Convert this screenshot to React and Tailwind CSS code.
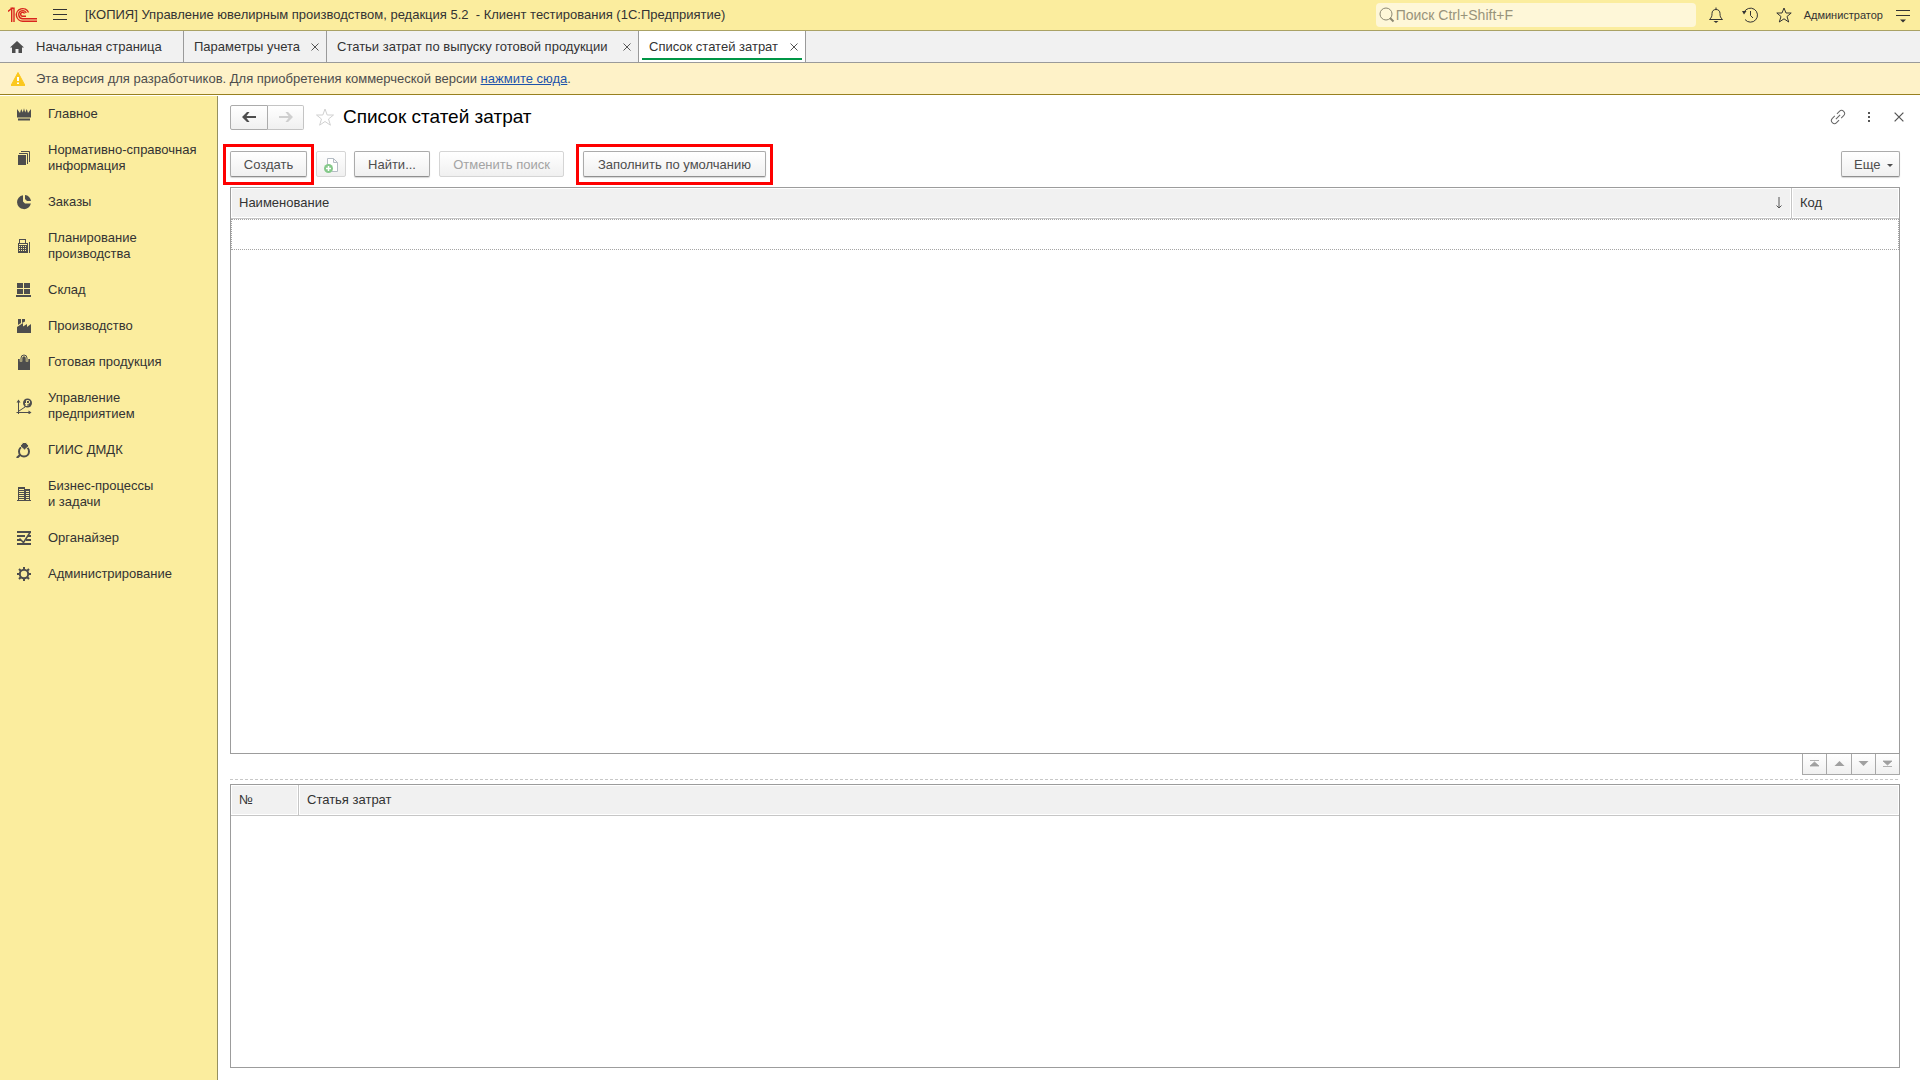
import React from 'react';

const Svg = ({ size = 'size-4', box = 16, children, ...rest }) => (
  <svg viewBox={`0 0 ${box} ${box}`} className={`${size} shrink-0`} fill="none" aria-hidden="true" {...rest}>
    {children}
  </svg>
);

const ink = '#4d4d4d';

const icons = {
  crown: (
    <Svg fill={ink}>
      <path d="M1 3l3 4 1.200-4L6.800 6.500 8 2.300 9.200 6.500 10.800 3 12 7l3-4v8.500H1z" />
      <path d="M2 12.500h12v2H2z" />
    </Svg>
  ),
  docs: (
    <Svg fill={ink}>
      <path d="M2 5h8v10H2z" />
      <path d="M3 3.500h8.500V14M5 1.500h8.500V12" stroke={ink} fill="none" />
    </Svg>
  ),
  pie: (
    <Svg fill={ink}>
      <path d="M7 1.200A7 7 0 1 0 14.900 9.500H9L7 7.500z" />
      <path d="M9 1a6.500 6.500 0 0 1 6 6H11L9 5z" />
    </Svg>
  ),
  calculator: (
    <Svg fill={ink} shapeRendering="crispEdges">
      <path fillRule="evenodd" d="M3 1h7v4h2v10H2V5h1zM4 2v3h5V2zM3 6v1h8V6zM3 8v1h1V8zm2 0v1h1V8zm2 0v1h1V8zm2 0v1h1V8zM3 10v1h1v-1zm2 0v1h1v-1zm2 0v1h1v-1zm2 0v1h1v-1zM3 12v1h1v-1zm2 0v1h1v-1zm2 0v1h1v-1zm2 0v1h1v-1z" />
      <path d="M13 4h1v11h-1z" />
    </Svg>
  ),
  store: (
    <Svg fill={ink} shapeRendering="crispEdges">
      <path d="M1 1h6v5H1zM8 1h6v5H8zM1 7h6v5H1zM8 7h6v5H8zM0 13h15v2H0z" />
    </Svg>
  ),
  factory: (
    <Svg fill={ink}>
      <path d="M1 15V9l6-4v3.500L11 6v3l4-3v9z" />
      <path d="M2 1h3v4L2 7zM6 1h3v2.500L6 5z" />
    </Svg>
  ),
  bag: (
    <Svg fill={ink}>
      <path d="M2 5h12v11H2z" />
      <path d="M5 7.500V4a3 3 0 0 1 6 0v3.500" stroke="#fbed9e" strokeWidth="2.500" />
      <path d="M5 7V4a3 3 0 0 1 6 0v3" stroke={ink} fill="none" />
    </Svg>
  ),
  growth: (
    <Svg stroke={ink}>
      <path d="M2.500 16V3M.500 14.500H14M3 13l6-4" />
      <path d="M.500 4.500l2-3 2 3zM12.500 12.500l3 2-3 2z" fill={ink} stroke="none" />
      <circle cx="11.500" cy="5" r="4.500" fill={ink} stroke="none" />
      <path d="M10.500 8V2.500h1.700a1.500 1.500 0 0 1 0 3H9M9 7h3.500" stroke="#fbed9e" />
    </Svg>
  ),
  ring: (
    <Svg stroke={ink}>
      <circle cx="8" cy="9.500" r="5" strokeWidth="2" />
      <path d="M4.500 12.500L.800 16" strokeWidth="2.200" />
      <path d="M4 4l3-3.500h3L13 4 8.500 8z" fill={ink} stroke="#fbed9e" />
    </Svg>
  ),
  building: (
    <Svg fill={ink} shapeRendering="crispEdges">
      <path fillRule="evenodd" d="M2 1h7v2h5v11h1v1H1v-1h1zM3 3v1h5V3zm0 2v1h5V5zm0 2v1h5V7zm0 2v1h5V9zm0 2v1h5v-1zm0 2v1h5v-1zM10 5v1h3V5zm0 2v1h3V7zm0 2v1h3V9zm0 2v1h3v-1zm0 2v1h3v-1z" />
    </Svg>
  ),
  organizer: (
    <Svg stroke={ink}>
      <path d="M1 2h14M1 6h8M12 6h3M1 10h4M10 10h5M1 14h14" strokeWidth="2" />
      <path d="M3.500 8.500l4 4L14 2.500" strokeWidth="1.500" />
    </Svg>
  ),
  gear: (
    <Svg stroke={ink}>
      <circle cx="8" cy="8" r="4.200" strokeWidth="2" />
      <path d="M8 1v3M8 12v3M1 8h3M12 8h3M3 3l2.200 2.200M10.800 10.800L13 13M13 3l-2.200 2.200M5.200 10.800L3 13" strokeWidth="2" />
    </Svg>
  ),
};

const sections = [
  ['crown', 'Главное'],
  ['docs', 'Нормативно-справочная', 'информация'],
  ['pie', 'Заказы'],
  ['calculator', 'Планирование', 'производства'],
  ['store', 'Склад'],
  ['factory', 'Производство'],
  ['bag', 'Готовая продукция'],
  ['growth', 'Управление', 'предприятием'],
  ['ring', 'ГИИС ДМДК'],
  ['building', 'Бизнес-процессы', 'и задачи'],
  ['organizer', 'Органайзер'],
  ['gear', 'Администрирование'],
];

const Cross = ({ size = 'size-2' }) => (
  <Svg size={size} box={8} stroke="#555">
    <path d="M.5.500l7 7M7.500.500l-7 7" strokeWidth="1" />
  </Svg>
);

function Logo() {
  return (
    <svg viewBox="0 0 30 16" className="h-4 w-[30px] shrink-0" fill="none" stroke="#d9251d" strokeWidth="1.400" role="img" aria-label="1С">
      <path d="M0 4.500L3.700 1.500V15M2.500 1.200H6V15" />
      <path d="M20.500 5.500A6.300 6.300 0 1 0 15 14.200H29" />
      <path d="M18.300 5.800A4 4 0 1 0 15 11.700H29" />
      <path d="M16.500 6.500a2 2 0 1 0-1.500 2.700h3" />
    </svg>
  );
}

function TitleBar() {
  return (
    <header className="flex h-[31px] shrink-0 items-center border-b border-[#aaa265] bg-[#fbed9e] pl-2 pr-[9px]">
      <Logo />
      <button type="button" aria-label="Меню" className="ml-[14px]">
        <Svg size="size-4" stroke="#333" shapeRendering="crispEdges">
          <path d="M1 2.500h14M1 7.500h14M1 12.500h14" />
        </Svg>
      </button>
      <h1 className="ml-[17px] flex-1 whitespace-pre text-[#333]">
        {'[КОПИЯ] Управление ювелирным производством, редакция 5.2  - Клиент тестирования (1С:Предприятие)'}
      </h1>
      <label className="flex h-6 w-80 items-center gap-px rounded-sm bg-[#fef7d8] pl-[3px]">
        <Svg stroke="#8c8872">
          <circle cx="7" cy="7" r="6" />
          <path d="M11 11l3.500 3.500" strokeWidth="2" />
        </Svg>
        <input
          type="search"
          aria-label="Поиск"
          placeholder="Поиск Ctrl+Shift+F"
          className="min-w-0 flex-1 bg-transparent text-[14px] outline-none placeholder:text-[#98937b]"
        />
      </label>
      <div className="ml-3 flex items-center gap-[18px]">
        <button type="button" aria-label="Уведомления">
          <Svg stroke="#333">
            <path d="M1.500 12.500C3.500 10.500 4 9.500 4 6.500 4 4 5.500 2.500 8 2.500s4 1.500 4 4c0 3 .5 4 2.500 6z" />
            <path d="M8 .500v2" />
            <path d="M5.500 14h5L8 16z" fill="#333" stroke="none" />
          </Svg>
        </button>
        <button type="button" aria-label="История">
          <Svg stroke="#333">
            <path d="M2 5.500A7 7 0 1 1 3 12.500M8.500 4v4.500L11 11" />
            <path d="M0 4l4.500 0L2 7.500z" fill="#333" stroke="none" />
          </Svg>
        </button>
        <button type="button" aria-label="Избранное">
          <Svg stroke="#333">
            <path d="M8 1l2 5h5.200l-4.200 3.500 1.700 5.500L8 11.800 3.300 15 5 9.500.8 6H6z" />
          </Svg>
        </button>
      </div>
      <button type="button" className="ml-3 text-[11px] text-[#333]">Администратор</button>
      <button type="button" aria-label="Настройки" className="ml-3">
        <Svg stroke="#333" size="size-4">
          <path d="M1 3.500h14M1 8.500h14" shapeRendering="crispEdges" />
          <path d="M5 12.500h6L8 15.500z" fill="#333" stroke="none" />
        </Svg>
      </button>
    </header>
  );
}

function Tab({ label, width, active }) {
  return (
    <div className={`relative flex items-center justify-between border-r border-[#9a9a9a] pl-[10px] pr-[7px] whitespace-nowrap ${width} ${active ? 'bg-white' : ''}`}>
      <button type="button">{label}</button>
      <button type="button" aria-label={`Закрыть: ${label}`}><Cross /></button>
      {active && <span className="absolute inset-x-[3px] bottom-[2px] h-[2px] bg-[#009646]" />}
    </div>
  );
}

function Tabs() {
  return (
    <nav aria-label="Открытые окна" className="flex h-8 shrink-0 border-b border-[#9a9a9a] bg-[#f1f1f1] text-[#333]">
      <button type="button" className="flex w-[184px] items-center gap-3 border-r border-[#9a9a9a] pl-[10px]">
        <Svg size="size-[14px]" box={14} fill={ink}>
          <path d="M7 1l7 6.500h-2V13H8.500V9h-3v4H2V7.500H0z" />
        </Svg>
        Начальная страница
      </button>
      <Tab label="Параметры учета" width="w-[143px]" />
      <Tab label="Статьи затрат по выпуску готовой продукции" width="w-[312px]" />
      <Tab label="Список статей затрат" width="w-[167px]" active />
    </nav>
  );
}

function Banner() {
  return (
    <div className="flex h-8 shrink-0 items-center gap-[11px] border-b border-[#98801f] bg-[#fef2c8] pl-[11px] text-[#4d4d4d]">
      <Svg size="size-[14px]" box={14} fill="#fbc81f">
        <path d="M7 .500L14 13.500H0z" stroke="#fbc81f" strokeLinejoin="round" />
        <path d="M6 5h2v4H6zM6 10.500h2v1.500H6z" fill="#fff" />
      </Svg>
      <p>
        Эта версия для разработчиков. Для приобретения коммерческой версии{' '}
        <a href="#buy" className="text-[#1d53ab] underline">нажмите сюда</a>.
      </p>
    </div>
  );
}

function Sidebar() {
  return (
    <nav aria-label="Разделы" className="w-[218px] shrink-0 border-r border-[#96905f] bg-[#fbed9e] text-[#333]">
      {sections.map(([icon, ...lines]) => (
        <a key={icon} href={`#${icon}`} className="flex items-center gap-4 py-[10px] pl-4 leading-4">
          {icons[icon]}
          <span>
            {lines.map((line) => <span key={line} className="block whitespace-nowrap">{line}</span>)}
          </span>
        </a>
      ))}
    </nav>
  );
}

const btn = 'h-[26px] rounded-xs border bg-linear-to-b from-white to-[#f0f0f0] pt-px whitespace-nowrap';
const on = 'border-[#ababab] border-b-[#8f8f8f] text-[#4d4d4d] shadow-[0_1px_1px_#0000002a]';
const off = 'border-[#d5d5d5] text-[#a3a3a3]';

const Highlighted = ({ children }) => (
  <div className="relative flex">
    {children}
    <span className="pointer-events-none absolute -inset-x-[7px] -top-[7px] -bottom-2 border-[3px] border-[#fe0000]" />
  </div>
);

const Arrow = ({ color, flip }) => (
  <Svg box={14} className={flip ? 'size-[14px] rotate-180' : 'size-[14px]'} fill={color}>
    <path d="M0 7l5-5h2.500L4.500 6H14v2H4.500l3 4H5z" />
  </Svg>
);

function FormHeader() {
  return (
    <div className="flex h-[26px] items-center">
      <div className="flex h-[25px]">
        <button type="button" aria-label="Назад" className="flex w-[38px] items-center justify-center rounded-l-xs border border-[#ababab] bg-linear-to-b from-white to-[#f0f0f0]">
          <Arrow color="#4d4d4d" />
        </button>
        <button type="button" disabled aria-label="Вперед" className="flex w-9 items-center justify-center rounded-r-xs border border-l-0 border-[#c4c4c4] bg-linear-to-b from-white to-[#f0f0f0]">
          <Arrow color="#cfcfcf" flip />
        </button>
      </div>
      <button type="button" aria-label="В избранное" className="ml-3">
        <Svg size="size-[18px]" box={18} stroke="#d0d0d0">
          <path d="M9 1l2.200 6H17.500l-5 4 1.900 6.200L9 13.500l-5.400 3.700L5.500 11l-5-4H6.800z" />
        </Svg>
      </button>
      <h2 className="ml-[9px] flex-1 text-[19px] leading-6 text-black">Список статей затрат</h2>
      <div className="-mr-1 flex items-center gap-[15px]">
        <button type="button" aria-label="Ссылка">
          <Svg stroke="#666">
            <g transform="rotate(-45 8 8)">
              <path d="M6.500 5H3a3 3 0 0 0 0 6h3.500M9.500 5H13a3 3 0 0 1 0 6H9.500" />
              <path d="M5 8h6" />
            </g>
          </Svg>
        </button>
        <button type="button" aria-label="Дополнительно">
          <Svg fill="#555"><path d="M7 3h2v2H7zM7 7h2v2H7zM7 11h2v2H7z" /></Svg>
        </button>
        <button type="button" aria-label="Закрыть" className="ml-[2px]"><Cross size="size-[10px]" /></button>
      </div>
    </div>
  );
}

function Toolbar() {
  return (
    <div className="flex items-center">
      <Highlighted><button type="button" className={`${btn} ${on} w-[77px]`}>Создать</button></Highlighted>
      <button type="button" disabled aria-label="Скопировать" className={`${btn} ${off} ml-[9px] flex w-[30px] items-center justify-center`}>
        <Svg>
          <path d="M4.500 9V1.500h6l4 4v9H9M10.500 1.500v4h4" stroke="#b4bcc4" fill="#fff" />
          <circle cx="5.500" cy="11.500" r="4.500" fill="#85c98a" />
          <path d="M5.500 9v5M3 11.500h5" stroke="#fff" strokeWidth="1.500" />
        </Svg>
      </button>
      <button type="button" className={`${btn} ${on} ml-2 w-[76px]`}>Найти...</button>
      <button type="button" disabled className={`${btn} ${off} ml-[9px] w-[125px]`}>Отменить поиск</button>
      <div className="ml-[19px]">
        <Highlighted><button type="button" className={`${btn} ${on} w-[183px]`}>Заполнить по умолчанию</button></Highlighted>
      </div>
      <button type="button" className={`${btn} ${on} ml-auto flex w-[59px] items-center justify-between pl-3 pr-[6px]`}>
        Еще
        <Svg size="size-[6px]" box={6} fill="#4d4d4d"><path d="M0 2h6L3 5z" /></Svg>
      </button>
    </div>
  );
}

const th = 'border-b border-[#c6c6c6] bg-[#f1f1f1] px-2 text-left font-normal shadow-[inset_0_0_0_1px_#fff]';

function ItemsTable() {
  return (
    <div className="min-h-0 flex-[2_2_2px] border border-[#9c9c9c]">
      <table className="w-full table-fixed border-separate border-spacing-0">
        <thead>
          <tr className="h-[31px]">
            <th scope="col" className={`${th} border-r`}>
              <span className="flex items-center justify-between">
                Наименование
                <Svg size="h-3 w-2" viewBox="0 0 8 12" stroke="#555">
                  <path d="M4 0v11M1.500 8.500L4 11l2.500-2.500" />
                </Svg>
              </span>
            </th>
            <th scope="col" className={`${th} w-[107px]`}>Код</th>
          </tr>
        </thead>
        <tbody>
          <tr className="h-[31px]">
            <td colSpan={2} className="border border-dotted border-[#a5a5a5]" />
          </tr>
        </tbody>
      </table>
    </div>
  );
}

const moves = [
  ['В начало', 'M3 1.500h9M7.500 3l4.500 4H3z'],
  ['Вверх', 'M7.500 2l5 5h-10z'],
  ['Вниз', 'M7.500 7l5-5h-10z'],
  ['В конец', 'M3 7.500h9M7.500 6l4.500-4H3z'],
];

function Pager() {
  return (
    <div className="flex h-[21px] shrink-0 justify-end">
      <div className="flex border-l border-[#a8a8a8]">
        {moves.map(([label, d], i) => (
          <button key={label} type="button" aria-label={label} className={`flex items-center justify-center border-r border-b border-[#a8a8a8] bg-linear-to-b from-white to-[#f0f0f0] ${i === 1 ? 'w-[25px]' : 'w-6'}`}>
            <svg viewBox="0 0 15 9" className="h-[9px] w-[15px]" fill="#a0a0a0" stroke={i % 3 === 0 ? '#a0a0a0' : 'none'} strokeWidth="0.8" aria-hidden="true">
              <path d={d} />
            </svg>
          </button>
        ))}
      </div>
    </div>
  );
}

function CostsTable() {
  return (
    <div className="min-h-0 flex-[1_1_0%] border border-[#9c9c9c]">
      <table className="w-full table-fixed border-separate border-spacing-0">
        <thead>
          <tr className="h-[31px]">
            <th scope="col" className={`${th} w-[68px] border-r`}>№</th>
            <th scope="col" className={th}>Статья затрат</th>
          </tr>
        </thead>
      </table>
    </div>
  );
}

export default function App() {
  return (
    <div className="flex min-h-screen flex-col bg-white font-['Liberation_Sans',Arial,sans-serif] text-[13px] leading-4 text-[#333]">
      <TitleBar />
      <Tabs />
      <Banner />
      <div className="mt-px flex flex-1">
        <Sidebar />
        <main className="flex min-w-0 flex-1 flex-col pt-2 pr-5 pb-3 pl-3">
          <FormHeader />
          <div className="mt-[21px] mb-[10px]"><Toolbar /></div>
          <ItemsTable />
          <Pager />
          <div className="mt-1 mb-1 h-px shrink-0 bg-[repeating-linear-gradient(90deg,#c8c8c8_0_3px,transparent_3px_5px)]" />
          <CostsTable />
        </main>
      </div>
    </div>
  );
}
